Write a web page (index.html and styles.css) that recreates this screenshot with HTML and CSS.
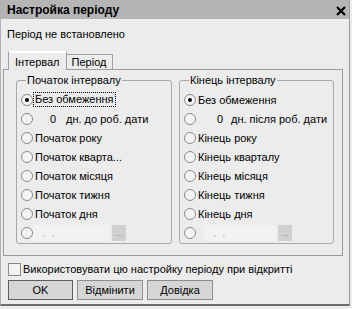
FILE: index.html
```html
<!DOCTYPE html>
<html lang="uk">
<head>
  <meta charset="UTF-8">
  <title>Настройка періоду</title>
  <link rel="stylesheet" href="styles.css">
</head>
<body>
  <div class="window">
    <div class="titlebar">
      <span class="title">Настройка періоду</span>
      <svg class="close" width="10" height="10" viewBox="0 0 10 10"><path d="M1 1L9 9M9 1L1 9" stroke="#000" stroke-width="2.2"/></svg>
    </div>
    <div class="content">
      <div class="status">Період не встановлено</div>
      <div class="tabs">
        <div class="tab active">Інтервал</div>
        <div class="tab">Період</div>
      </div>
      <div class="panel">
        <fieldset class="group">
          <legend>Початок інтервалу</legend>
          <div class="opt"><span class="radio on"></span><span class="label focus">Без обмеження</span></div>
          <div class="opt"><span class="radio"></span><span class="num">0</span><span class="label">дн. до роб. дати</span></div>
          <div class="opt"><span class="radio"></span><span class="label">Початок року</span></div>
          <div class="opt"><span class="radio"></span><span class="label">Початок кварта...</span></div>
          <div class="opt"><span class="radio"></span><span class="label">Початок місяця</span></div>
          <div class="opt"><span class="radio"></span><span class="label">Початок тижня</span></div>
          <div class="opt"><span class="radio"></span><span class="label">Початок дня</span></div>
          <div class="opt"><span class="radio"></span><span class="date">&nbsp;.&nbsp;&nbsp;.</span><span class="pick">...</span></div>
        </fieldset>
        <fieldset class="group">
          <legend>Кінець інтервалу</legend>
          <div class="opt"><span class="radio on"></span><span class="label">Без обмеження</span></div>
          <div class="opt"><span class="radio"></span><span class="num">0</span><span class="label">дн. після роб. дати</span></div>
          <div class="opt"><span class="radio"></span><span class="label">Кінець року</span></div>
          <div class="opt"><span class="radio"></span><span class="label">Кінець кварталу</span></div>
          <div class="opt"><span class="radio"></span><span class="label">Кінець місяця</span></div>
          <div class="opt"><span class="radio"></span><span class="label">Кінець тижня</span></div>
          <div class="opt"><span class="radio"></span><span class="label">Кінець дня</span></div>
          <div class="opt"><span class="radio"></span><span class="date">&nbsp;.&nbsp;&nbsp;.</span><span class="pick">...</span></div>
        </fieldset>
      </div>
      <label class="check"><span class="box"></span>Використовувати цю настройку періоду при відкритті</label>
      <div class="buttons">
        <button class="btn default">OK</button>
        <button class="btn">Відмінити</button>
        <button class="btn">Довідка</button>
      </div>
    </div>
  </div>
</body>
</html>
```

FILE: styles.css
```css
html, body {
  margin: 0;
  padding: 0;
  background: #ececec;
}
body {
  font-family: "Liberation Sans", Arial, sans-serif;
  font-size: 11px;
  color: #000;
}
.window {
  width: 350px;
  height: 306px;
  border-right: 1px solid #9a9a9a;
  border-bottom: 2px solid #6e6e6e;
  border-left: 1px solid #b0b0b0;
  background: #ececec;
  box-sizing: border-box;
}
.titlebar {
  height: 19px;
  background: #b5b5b5;
  display: flex;
  align-items: center;
  justify-content: space-between;
  padding: 0 3px 0 6px;
}
.title {
  font-weight: bold;
  font-size: 12px;
}
.close {
  display: block;
  margin-top: 3px;
}
.content {
  padding: 8px 0 0 2px;
}
.status {
  padding-left: 4px;
  height: 13px;
  line-height: 13px;
  margin-top: 1px;
}
.tabs {
  display: flex;
  margin-top: 10px;
  padding-left: 5px;
  height: 18px;
  align-items: flex-end;
}
.tab {
  height: 15px;
  line-height: 14px;
  padding: 0 6px 0 5px;
  border: 1px solid #a0a0a0;
  border-bottom: none;
  border-left: none;
  box-sizing: border-box;
}
.tab.active {
  height: 19px;
  line-height: 20px;
  padding: 0 6px 0 6px;
  border-left: 1px solid #a0a0a0;
  background: #ececec;
  margin-bottom: -1px;
  position: relative;
  z-index: 1;
  border-top-color: #fff;
  box-shadow: inset 0 1px 0 #fff;
}
.panel {
  width: 340px;
  height: 187px;
  box-sizing: border-box;
  border: 1px solid #9c9c9c;
  display: flex;
  gap: 7px;
  padding: 4px 0 0 12px;
}
.group {
  margin: 0;
  padding: 4px 0 0 4px;
  border: 1px solid #a8a8a8;
  border-radius: 3px;
  height: 170px;
  box-sizing: border-box;
}
.group:first-child {
  width: 156px;
}
.group:last-child {
  width: 155px;
}
legend {
  margin-left: 5px;
  padding: 0 1px;
  line-height: 12px;
}
.opt {
  display: flex;
  align-items: center;
  height: 19px;
}
.radio {
  width: 12px;
  height: 12px;
  box-sizing: border-box;
  border: 1px solid #8a8a8a;
  border-radius: 50%;
  background: #f4f4f4;
  flex: none;
  display: flex;
  align-items: center;
  justify-content: center;
}
.radio.on::after {
  content: "";
  width: 4px;
  height: 4px;
  border-radius: 50%;
  background: #000;
}
.label {
  margin-left: 1px;
  padding: 0 1px;
  white-space: nowrap;
}
.label.focus {
  outline: 1px dotted #000;
  outline-offset: 0;
  line-height: 13px;
}
.num {
  width: 23px;
  text-align: right;
  margin-right: 8px;
}
.group:last-child .num {
  width: 27px;
  margin-right: 6px;
}
.date {
  width: 77px;
  height: 16px;
  line-height: 16px;
  background: #f2f2f2;
  color: #9a9a9a;
  padding-left: 6px;
  box-sizing: border-box;
}
.group:last-child .date {
  width: 72px;
  margin-left: 8px;
}
.pick {
  width: 14px;
  height: 16px;
  line-height: 16px;
  margin-left: 2px;
  background: #d0d0d0;
  color: #8c8c8c;
  font-size: 9px;
  text-align: center;
}
.check {
  display: flex;
  align-items: center;
  margin-top: 6px;
  padding-left: 5px;
  height: 14px;
}
.box {
  width: 13px;
  height: 13px;
  box-sizing: border-box;
  border: 1px solid #8a8a8a;
  background: #f2f2f2;
  margin-right: 2px;
}
.buttons {
  display: flex;
  gap: 4px;
  margin-top: 4px;
  padding-left: 5px;
}
.btn {
  font-family: inherit;
  font-size: 11px;
  font-weight: normal;
  width: 66px;
  height: 20px;
  padding: 0;
  margin: 0;
  border: 1px solid #8e8e8e;
  border-radius: 0;
  background: #d6d6d6;
  color: #000;
}
.btn.default {
  width: 65px;
  border-color: #5e5e5e;
}
```
